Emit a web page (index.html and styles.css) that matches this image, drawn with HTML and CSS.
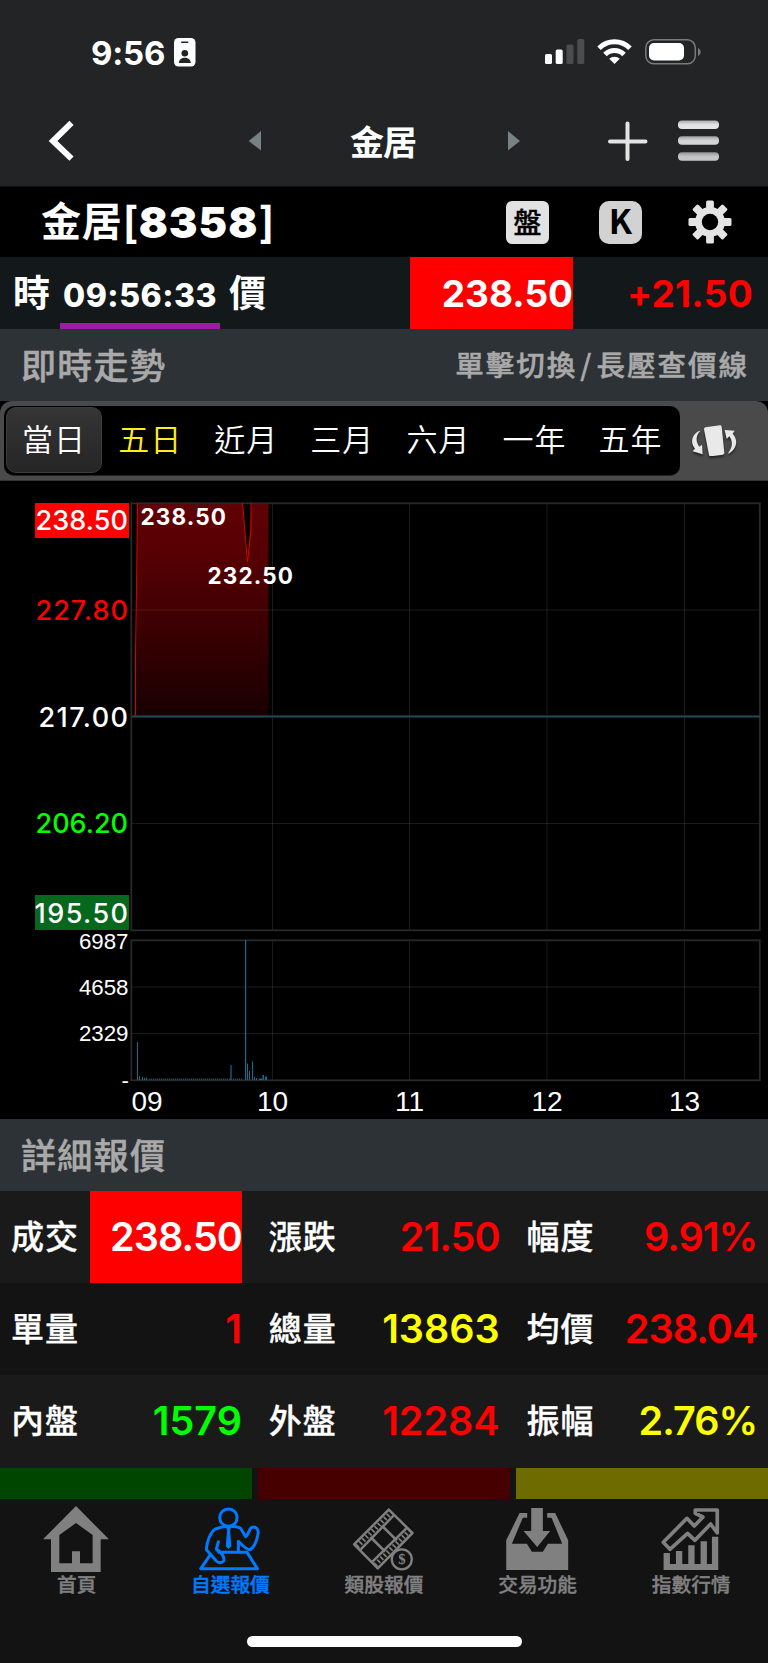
FILE: index.html
```html
<!DOCTYPE html>
<html lang="zh-Hant">
<head>
<meta charset="utf-8">
<title>金居 8358</title>
<link rel="stylesheet" href="styles.css">
</head>
<body>
<div class="app">
  <header class="top">
    <div class="status">
      <div class="clock"><span class="clock-time">9:56</span>
        <svg class="badge" viewBox="0 0 22 29"><rect width="21.5" height="28.6" rx="4.6" fill="#fff"/><rect x="7" y="3.6" width="7.5" height="1.4" rx=".7" fill="#222425"/><circle cx="10.8" cy="15.2" r="3.3" fill="#222425"/><path d="M4.8 25c.3-7 11.700-7 12 0z" fill="#222425"/></svg>
      </div>
      <div class="signals">
        <svg width="40" height="26" viewBox="0 0 40 26"><rect x="0" y="15" width="7" height="10" rx="1.6" fill="#fff"/><rect x="10.700" y="10.500" width="7" height="14.500" rx="1.600" fill="#fff"/><rect x="21.500" y="5.500" width="7" height="19.500" rx="1.600" fill="#4c4d4e"/><rect x="32.300" y="0" width="7" height="25" rx="1.600" fill="#4c4d4e"/></svg>
        <svg width="36" height="26" viewBox="0 0 36 26"><g fill="none" stroke="#fff" stroke-width="5"><path d="M2 9.200a22 22 0 0 1 31 0"/><path d="M8 15.500a13.300 13.300 0 0 1 19 0"/></g><path d="M17.500 25l-5.300-5.200a7.600 7.600 0 0 1 10.600 0z" fill="#fff"/></svg>
        <svg width="56" height="26" viewBox="0 0 56 26"><rect x=".8" y=".8" width="49.500" height="24" rx="8" fill="none" stroke="#7a7b7c" stroke-width="1.500"/><rect x="4" y="4" width="35" height="17.500" rx="5" fill="#fff"/><path d="M53 9v8c3.500-1.500 3.500-6.500 0-8z" fill="#7a7b7c"/></svg>
      </div>
    </div>
    <svg class="nav" viewBox="0 100 768 86">
      <path d="M71.500 122.800L53 141l18.500 17.600" fill="none" stroke="#fff" stroke-width="6"/>
      <path d="M261 131v19.500L248.700 141z" fill="#788185"/>
      <text x="350" y="154.500" textLength="67" class="nav-title">金居</text>
      <path d="M508 131v19.500L520 141z" fill="#788185"/>
      <path d="M627.500 123.500v35.500M610 141.500h35.500" stroke="#e4e4e4" stroke-width="4" stroke-linecap="round"/>
      <defs><linearGradient id="m" x2="0" y2="1"><stop offset="0" stop-color="#aaa"/><stop offset=".5" stop-color="#e3e3e3"/><stop offset="1" stop-color="#e5e5e5"/></linearGradient></defs>
      <rect x="678" y="120.500" width="41" height="8.500" rx="4" fill="url(#m)"/><rect x="678" y="136.300" width="41" height="8.500" rx="4" fill="url(#m)" opacity=".92"/><rect x="678" y="152.300" width="41" height="8.500" rx="4" fill="url(#m)" opacity=".84"/>
    </svg>
  </header>

  <section class="stock">
    <h1 class="name"><span class="cjk">金居</span><span class="br">[</span><span class="code">8358</span><span class="br">]</span></h1>
    <div class="tools">
      <span class="chip pan">盤</span>
      <span class="chip k">K</span>
      <svg width="44" height="44" viewBox="-22 -22 44 44"><g fill="#e4e4e4"><g id="t"><rect x="-3.900" y="-21.500" width="7.800" height="43" rx="1.500"/><rect x="-21.500" y="-3.900" width="43" height="7.800" rx="1.500"/></g><use href="#t" transform="rotate(45)"/><circle r="15"/></g><circle r="8.200" fill="#000"/></svg>
    </div>
  </section>

  <section class="price">
    <div class="when"><span class="cjk">時</span><span class="time">09:56:33</span><span class="cjk">價</span></div>
    <div class="last">238.50</div>
    <div class="diff">+21.50</div>
  </section>

  <section class="bar"><h2>即時走勢</h2><p>單擊切換<i>/</i>長壓查價線</p></section>

  <nav class="range">
    <div class="range-in">
      <span class="on">當日</span><span class="yl">五日</span><span>近月</span><span>三月</span><span>六月</span><span>一年</span><span>五年</span>
    </div>
    <svg class="rot" width="48" height="36" viewBox="0 0 144 108"><g fill="#e9e9e9"><path d="M46 22L90 16Q94 16 95 20L103 99Q103 103 99 104L62 109Q58 109 57 105L42 28Q42 23 46 22z"/><path d="M29 32C8 40-2 66 15 86L8 94 38 103 36 74 28 80C14 62 20 44 30 34z"/><path d="M104 30L134 32 128 41C146 60 140 88 116 101L115 98C128 83 129 64 118 49L110 57z"/></g></svg>
  </nav>

  <svg class="chart" viewBox="0 481 768 638">
    <defs><linearGradient id="area" x2="0" y2="1"><stop offset="0" stop-color="#600004"/><stop offset=".3" stop-color="#520003"/><stop offset="1" stop-color="#190001"/></linearGradient></defs>
    <path d="M135.500 716L137.500 503H242.500L247.500 562 251.500 503H268.500V716z" fill="url(#area)"/>
    <g stroke="#fff" stroke-opacity=".1" stroke-width="1"><path d="M272.500 503V930M409.500 503V930M547 503V930M684.500 503V930M131 610H760M131 823.500H760M272.500 940V1081M409.500 940V1081M547 940V1081M684.500 940V1081M131 987H760M131 1033.500H760"/></g>
    <g fill="none" stroke="#292929" stroke-width="1.800"><rect x="131.300" y="503.300" width="628.500" height="427"/><rect x="131.300" y="940.300" width="628.500" height="140"/></g>
    <path d="M132 716.500H760" stroke="#234b5b" stroke-width="2"/>
    <path d="M135.500 716V654L136.500 590 137.500 503M242.500 503L247.500 562 251 530V503" fill="none" stroke="#d80000" stroke-width="1"/>
    <g fill="#087295"><path d="M137 1042h1v38h-1zM245 940h1.200v140h-1.200zM139 1076h1v4h-1zM142 1077h1v3h-1zM144 1078h1v2h-1zM146 1077.500h1v2.500h-1zM247 1063.500h1v16.500h-1zM249 1071h1v9h-1zM252 1061.500h1v18.500h-1zM254 1077h1v3h-1zM256 1078h1v2h-1zM259 1078.500h3v1.500h-3zM262.500 1075h1.500v5h-1.500zM265 1076.500h2v3.500h-2z"/><path opacity=".6" d="M230 1065h2v15h-2zM185 1078h1v2h-1z"/></g>
    <path d="M149 1079.300H243" stroke="#065a76" stroke-width="1.500" stroke-dasharray="1 1"/>
    <rect x="35" y="503" width="94" height="35" fill="#f00"/><rect x="35" y="895" width="94" height="35" fill="#06681c"/>
    <g class="lv"><text x="35.500" y="530" textLength="92.500">238.50</text><text x="35.500" y="620" textLength="92.500" fill="#f00">227.80</text><text x="38.500" y="726.500" textLength="89.500">217.00</text><text x="35.500" y="833" textLength="92.500" fill="#0f0">206.20</text><text x="34.500" y="923" textLength="93.500">195.50</text></g>
    <g class="mk"><text x="140.500" y="524.500" textLength="85.500">238.50</text><text x="207.500" y="583.500" textLength="85.500">232.50</text></g>
    <g class="vol"><text x="128.500" y="948.500">6987</text><text x="128.500" y="995">4658</text><text x="128.500" y="1041">2329</text><text x="129" y="1088">-</text></g>
    <g class="hr"><text x="147" y="1110.500">09</text><text x="272.500" y="1110.500">10</text><text x="409.500" y="1110.500">11</text><text x="547" y="1110.500">12</text><text x="684.500" y="1110.500">13</text></g>
  </svg>

  <section class="bar"><h2>詳細報價</h2></section>

  <section class="quotes">
    <div class="row"><div class="q"><b>成交</b><span class="hit dec">238.50</span></div><div class="q"><b>漲跌</b><span class="r dec">21.50</span></div><div class="q"><b>幅度</b><span class="r dec">9.91%</span></div></div>
    <div class="row alt"><div class="q"><b>單量</b><span class="r">1</span></div><div class="q"><b>總量</b><span class="y">13863</span></div><div class="q"><b>均價</b><span class="r dec">238.04</span></div></div>
    <div class="row"><div class="q"><b>內盤</b><span class="g">1579</span></div><div class="q"><b>外盤</b><span class="r">12284</span></div><div class="q"><b>振幅</b><span class="y dec">2.76%</span></div></div>
  </section>
  <div class="strips"><i class="s1"></i><i class="s2"></i><i class="s3"></i></div>

  <footer class="foot">
    <nav class="tabs">
      <div class="tab"><svg viewBox="0 24 460.800 219"><path fill-rule="evenodd" fill="#808080" d="M228 45L327 145H302V243H153V145H129zM228 96L178 132V217H216V181H240V217H278V132z"/></svg>首頁</div>
      <div class="tab act"><svg viewBox="460.800 24 460.800 219"><g fill="none" stroke="#007aff" stroke-width="9" stroke-linejoin="round" stroke-linecap="round"><circle cx="684" cy="80" r="26"/><path d="M618 174C619 152 630 124 645 114C668 104 704 104 720 111L736 137C745 130 745 117 753 110C764 104 776 113 773 128C770 148 761 170 750 176C740 178 727 165 714 151V183M654 152L648 174C664 184 673 199 670 210C660 220 647 213 641 202L618 176M648 174L656 184M655 184H740L771 233H601L628 194"/></g><path d="M677 108H692L689 120 693 166 684 174 676 166 680 120z" fill="#007aff"/></svg>自選報價</div>
      <div class="tab"><svg viewBox="-122.400 -6 460.800 219"><g fill="none" stroke="#808080"><path stroke-width="7.500" stroke-linejoin="round" d="M19 130L123 26 194 96 90 202zM38 146L139 42M74 182L178 80"/><path stroke-width="8" d="M68 108L112 152M102 74L147 118"/><path stroke-width="14" stroke-dasharray="5 8" d="M28 137L131 34M82 192L186 88"/></g><circle cx="162" cy="175" r="30" fill="#131313" stroke="#808080" stroke-width="7"/><text x="162" y="190" class="coin">$</text></svg>類股報價</div>
      <div class="tab"><svg viewBox="230.400 24 460.800 219"><path fill="#808080" d="M406 66H429V80H416L383 158H428L443 182H476L491 158H534L502 80H489V66H513L552 148V237H366V148zM441 51H476V120H498L459 168 418 120H441z"/></svg>交易功能</div>
      <div class="tab"><svg viewBox="691.200 24 460.800 219"><g fill="none" stroke="#808080" stroke-width="11"><path d="M839 154L910 82 932 105 958 78 935 67V57H1001V126L981 99 934 148 912 127 859 175z" stroke-linejoin="round"/></g><path fill="#808080" d="M840 186H859V219H877V180H896V219H914V163H933V219H951V151H970V219H985V137H1004V237H840z"/></svg>指數行情</div>
    </nav>
    <div class="home"></div>
  </footer>
</div>
</body>
</html>
```
FILE: styles.css
```css
* { box-sizing: border-box; }
body { margin: 0; background: #000; color: #fff; font-family: Inter, "Noto Sans CJK TC", sans-serif; }
h1, h2, p { margin: 0; }
svg { display: block; flex: none; }
.app { width: 768px; height: 1663px; display: flex; flex-direction: column; overflow: hidden; }
.top { height: 187px; background: #222425; border-bottom: 1px solid #111; flex: none; }
.status { height: 100px; display: flex; justify-content: space-between; padding: 37px 67px 0 91px; }
.clock { display: flex; gap: 8px; }
.clock-time { font-size: 33px; font-weight: 700; line-height: 32px; letter-spacing: -0.2px; width: 75px; }
.badge { width: 22px; height: 29px; margin-top: 1px; }
.signals { display: flex; gap: 12px; padding-top: 2px; }
.nav { width: 768px; height: 86px; }
.nav-title { font-size: 34px; font-weight: 700; fill: #fff; }

.stock { height: 70px; flex: none; display: flex; justify-content: space-between; align-items: center; padding: 0 36px 0 41px; }
.name { display: flex; align-items: center; font-size: 43px; line-height: 60px; }
.name .cjk { font-size: 40px; font-weight: 700; letter-spacing: 0.800px; }
.name .br { font-weight: 600; }
.name .code { font-weight: 900; letter-spacing: 1px; }
.tools { display: flex; align-items: center; }
.chip { width: 43px; height: 43px; border-radius: 6px; background: #e2e2e2; color: #000; display: flex; align-items: center; justify-content: center; }
.pan { font-size: 28px; font-weight: 500; margin-right: 50px; padding-bottom: 3px; -webkit-text-stroke: 0.400px; }
.k { font-family: "Noto Sans CJK TC", sans-serif; font-size: 34px; font-weight: 700; border-radius: 10px; background: #d2d2d2; margin-right: 46px; line-height: 38px; padding-bottom: 4px; }

.price { height: 72px; flex: none; background: #13181a; display: flex; }
.when { width: 410px; padding-left: 13px; display: flex; }
.when .cjk { font-size: 37px; font-weight: 700; line-height: 73px; }
.time { width: 160px; height: 72px; margin: 0 9px 0 10px; border-bottom: 6px solid #9d1ca5; font-size: 32px; font-weight: 850; line-height: 78px; text-align: center; letter-spacing: 0.500px; }
.last { width: 163px; background: #f00; font-size: 37px; font-weight: 750; line-height: 73px; text-align: right; }
.diff { flex: 1; padding-right: 15px; color: #f00; font-size: 37px; font-weight: 750; line-height: 73px; text-align: right; letter-spacing: 0.300px; }

.bar { height: 72px; flex: none; background: #2d3236; color: #a9a9a9; display: flex; justify-content: space-between; align-items: center; padding: 0 19px 0 21px; font-family: "Noto Sans CJK TC", sans-serif; -webkit-text-stroke: 0.500px; }
.bar h2 { font-size: 35px; font-weight: 500; letter-spacing: 1.300px; line-height: 70px; padding-bottom: 3px; }
.bar p { font-size: 28.500px; font-weight: 500; letter-spacing: 2px; line-height: 72px; padding-bottom: 2px; }
.bar i { font-style: normal; padding: 0 3px; }

.range { height: 80px; flex: none; background: #4a4a4a; border-radius: 12px 12px 0 0; display: flex; align-items: center; border-bottom: 1px solid #333; }
.range-in { width: 676px; height: 70px; margin-left: 4px; background: #000; border-radius: 10px; display: flex; align-items: center; flex: none; border-bottom: 1px solid #222; }
.range-in span { width: 96.100px; height: 66px; line-height: 60px; text-align: center; font-family: "Noto Sans CJK TC", sans-serif; font-weight: 350; font-size: 31px; letter-spacing: 1px; border: 1px solid transparent; }
.range-in .on { background: linear-gradient(#353535, #252525); border-color: #3c3c3c; border-radius: 10px; margin-left: 2px; }
.range-in .yl { color: #ffee1c; }
.rot { margin: 0 0 6px 10px; filter: drop-shadow(0 2px 1px #222); }

.chart { width: 768px; height: 638px; flex: none; }
.chart text { fill: #fff; }
.lv text { font-size: 27px; font-weight: 550; }
.lv text[fill="#f00"] { fill: #f00; }
.lv text[fill="#0f0"] { fill: #0f0; }
.mk text { font-size: 22.500px; font-weight: 750; }
.vol text { font-family: "Liberation Sans", sans-serif; font-size: 22.300px; text-anchor: end; }
.hr text { font-family: "Liberation Sans", sans-serif; font-size: 28px; text-anchor: middle; }

.row { height: 92px; display: grid; grid-template-columns: 242px 242px 242px; column-gap: 15.700px; background: #1a1a1a; }
.row:last-child { height: 92.500px; }
.alt { background: #131313; }
.q { display: flex; line-height: 92px; }
.q b { width: 90px; padding-left: 11px; font-family: "Noto Sans CJK TC", sans-serif; font-size: 33px; font-weight: 500; letter-spacing: 1px; line-height: 89px; -webkit-text-stroke: 0.300px; }
.q span { flex: 1; text-align: right; font-size: 39.500px; font-weight: 580; }
.q .dec { letter-spacing: -0.900px; }
.hit { background: #f00; }
.r { color: #f00; }
.y { color: #ff0; }
.g { color: #0f0; }
.strips { height: 31px; flex: none; display: grid; grid-template-columns: repeat(3, 1fr); gap: 6px; background: #131313; }
.s1 { background: #004600; }
.s2 { background: #460000; }
.s3 { background: #6e6b00; }

.foot { flex: 1; background: #131313; }
.tabs { display: grid; grid-template-columns: repeat(5, minmax(0, 1fr)); height: 137.500px; }
.tab { text-align: center; font-family: "Noto Sans CJK TC", sans-serif; font-size: 19.700px; font-weight: 500; line-height: 24px; color: #808080; -webkit-text-stroke: 0.400px; }
.tab svg { width: 153.600px; height: 73px; }
.act { color: #007aff; }
.coin { font: bold 44px "Liberation Serif", serif; fill: #808080; text-anchor: middle; }
.home { width: 275px; height: 11px; margin: 0 auto; border-radius: 6px; background: #fff; }
```
